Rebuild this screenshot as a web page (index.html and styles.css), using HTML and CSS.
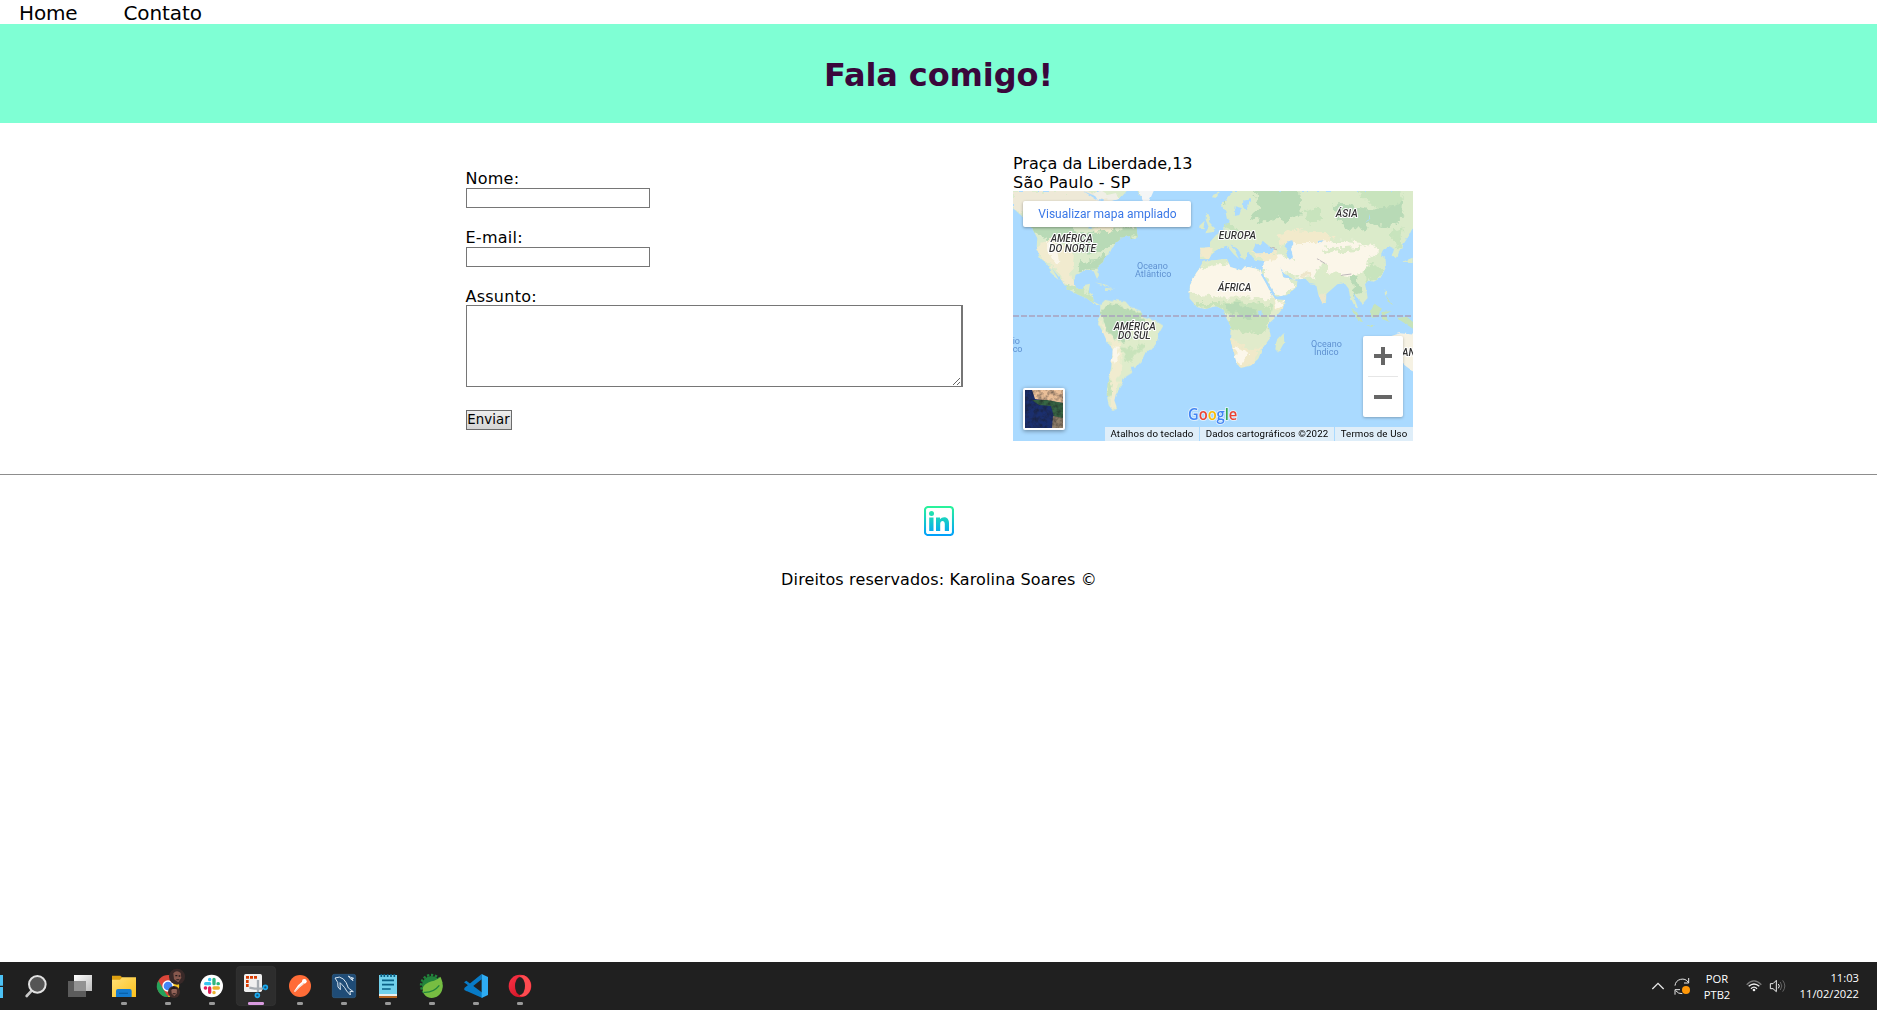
FILE: index.html
```html
<!DOCTYPE html>
<html lang="pt-BR">
<head>
<meta charset="utf-8">
<title>Contato</title>
<link rel="stylesheet" href="styles.css">
</head>
<body>
<nav class="nav"><a class="nav-home">Home</a><a class="nav-contact">Contato</a></nav>
<header class="banner"><h1>Fala comigo!</h1></header>
<main class="contact">
  <form class="form">
    <label for="nome">Nome:</label>
    <input id="nome" class="field" type="text">
    <label for="email">E-mail:</label>
    <input id="email" class="field" type="text">
    <label for="assunto">Assunto:</label>
    <textarea id="assunto" class="message"></textarea>
    <button class="send" type="button">Enviar</button>
  </form>
  <section class="place">
    <p class="address">Praça da Liberdade,13<br><span class="city">São Paulo - SP</span></p>
    <div class="map">
      <svg class="world" viewBox="9 9 1200 750">
        <defs>
          <clipPath id="na"><path id="pna" d="M9 9H395L392 35L370 60L365 95L380 120L383 148L362 154L360 144L338 148L318 165L305 182L298 198L284 206L279 222L262 236L267 262L261 273L251 250L225 248L197 260L191 282L200 302L217 306L223 291L240 287L236 311L248 320L252 341L270 351L262 355L230 331L205 320L171 302L151 272L125 240L142 268L146 276L130 264L111 228L91 214L79 184L82 151L66 120L40 100L25 75L9 60Z"/></clipPath>
          <clipPath id="sa"><path id="psa" d="M271 350L286 335L306 340L315 336L346 340L358 354L392 369L400 388L440 400L460 413L446 438L440 465L425 485L408 490L394 520L375 540L362 536L367 554L343 569L337 585L326 603L318 617L313 637L322 661L310 669L296 652L290 620L293 580L303 542L308 485L291 460L278 431L264 406L270 383Z"/></clipPath>
          <clipPath id="af"><path id="paf" d="M579 221L620 216L651 213L661 237L694 247L705 235L752 245L758 265L779 309L797 334L826 336L819 361L794 391L775 408L783 447L758 480L745 512L722 533L694 541L681 529L660 452L663 418L649 390L642 366L619 355L585 363L562 358L538 331L539 294L557 258L567 242Z"/></clipPath>
          <clipPath id="ea"><path id="pea" d="M633 51L668 9H1209V118L1196 145L1178 172L1168 189L1160 213L1147 201L1153 180L1137 175L1119 189L1113 202L1127 214L1128 238L1112 269L1091 281L1074 278L1065 289L1070 311L1073 330L1058 347L1042 331L1030 315L1036 339L1046 367L1034 355L1020 326L1016 302L1003 285L982 289L967 302L949 318L948 346L938 349L925 320L918 288L899 286L886 272L852 275L827 260L812 241L821 268L863 278L857 300L830 322L798 326L768 279L755 255L763 220L735 215L723 201L712 193L705 216L694 208L683 181L661 169L677 192L687 213L671 199L650 173L632 179L609 193L597 214L570 213L571 179L600 177L600 162L618 141L643 125L642 107L658 104L659 87L688 81L695 60L674 55L671 89L651 94L646 69Z"/></clipPath>
          <filter id="rough" x="0" y="0" width="100%" height="100%"><feTurbulence type="fractalNoise" baseFrequency=".045" numOctaves="3" seed="7"/><feDisplacementMap in="SourceGraphic" scale="34" xChannelSelector="R" yChannelSelector="G"/></filter>
          <filter id="coast" x="-2%" y="-2%" width="104%" height="104%"><feTurbulence type="fractalNoise" baseFrequency=".07" numOctaves="2" seed="3"/><feDisplacementMap in="SourceGraphic" scale="9" xChannelSelector="R" yChannelSelector="G"/></filter>
        </defs>
        <rect x="9" y="9" width="1200" height="750" fill="#aadaff"/>
        <g filter="url(#coast)">
          <g clip-path="url(#na)">
            <rect width="410" height="370" fill="#dcebcc"/>
            <g filter="url(#rough)">
              <path fill="#b8dab6" d="M60 105H180L200 135L320 125L390 105V155L300 180L230 200L200 165L130 150L120 190L105 150L70 140ZM205 223L250 220L285 200V245L245 245L210 250Z"/>
              <path fill="#f1ebcf" d="M82 170L130 155L190 190L185 240L195 300L170 290L130 235L95 215Z"/>
              <path fill="#faf6ea" d="M105 165L140 175L148 218L130 222Z"/>
              <path fill="#eee9d7" d="M9 9H220L310 30V70H9Z"/><path fill="#f2eccf" d="M250 120L310 110V130L250 135Z"/>
              <path fill="#c8e4bd" d="M150 278L175 292L215 305L245 318L255 345L215 330L165 303Z"/>
            </g>
          </g>
          <g clip-path="url(#sa)">
            <rect x="250" y="330" width="225" height="350" fill="#dfeccb"/>
            <g filter="url(#rough)">
              <path fill="#b9dab5" d="M275 370L295 345L355 358L398 380L405 405L370 410L350 460L310 448L285 420Z"/>
              <path fill="#f1eccf" d="M265 400L300 440L335 470L334 530L320 620L320 662L302 665L303 535L307 485L280 445Z"/>
              <path fill="#fbf7eb" d="M309 475L326 480L320 530L306 520Z"/>
              <path fill="#c8e3bb" d="M335 480L350 525L375 500L405 480L390 462L370 490ZM293 570L305 585L300 625L289 622Z"/>
            </g>
          </g>
          <g clip-path="url(#ea)">
            <rect x="550" width="660" height="360" fill="#dbebca"/>
            <g filter="url(#rough)">
              <path fill="#b8dab6" d="M730 0H870L875 75L845 85L830 108L800 90L760 105L720 88L750 65ZM963 60L990 45L1080 65L1180 30L1175 90L1140 120L1080 105L1050 125L1005 115ZM1014 260L1040 265L1052 310L1038 330L1027 295ZM630 25L650 15L645 50Z"/>
              <path fill="#c8e4bd" d="M1030 0H1185L1160 55L1090 55ZM1065 230L1095 222L1120 245L1105 270L1070 280ZM1148 125L1178 115L1170 188L1150 165ZM630 110L660 105L700 130L670 140ZM880 70L930 60L940 95L900 105Z"/>
              <path fill="#f2eacb" d="M800 145L850 125L915 130L970 145L970 165L875 170L820 170ZM725 195L800 192L810 215L760 218ZM570 180L606 181L600 210L573 212Z"/>
              <path fill="#fbf6e9" d="M835 165L915 165L990 158L1090 168L1102 195L1070 220L1060 255L1018 263L965 255L930 225L910 270L820 262L755 247L763 215L815 205L840 210ZM758 250L800 255L858 285L830 320L803 325ZM902 270L918 268L916 284Z"/>
              <path fill="#dcebc9" d="M935 182L1070 172L1035 190L960 195ZM930 222L965 256L1010 260L1003 282L982 275L945 260Z"/>
              <path fill="#ede6cb" d="M875 245L900 252L895 268L875 260ZM925 320L947 310L946 344L936 345Z"/>
            </g>
          </g>
          <g clip-path="url(#af)">
            <rect x="530" y="205" width="310" height="345" fill="#e1ebcb"/>
            <g filter="url(#rough)">
              <path fill="#fbf6e8" d="M570 235L640 223L760 240L790 335L755 332L700 326L615 325L540 320L535 275Z"/>
              <path fill="#dcebc8" d="M572 220L650 210L665 226L610 230L575 246Z"/>
              <path fill="#c8e3bb" d="M540 345L620 345L685 340L760 345L785 360L770 430L710 435L665 425L650 385L635 358L565 362Z"/>
              <path fill="#b8dab5" d="M650 352L680 345L710 360L745 370L720 390L665 378Z"/>
              <path fill="#f0e9c9" d="M663 450L690 470L735 485L760 465L730 530L690 541L660 495ZM790 340L825 335L812 370L790 365Z"/>
              <path fill="#fcf7eb" d="M664 472L695 482L715 495L688 530ZM791 335L824 338L818 355L795 360Z"/>
            </g>
          </g>
          <path fill="#dcebc9" d="M568 113L584 98L580 124L568 122ZM588 74L600 87L597 101L616 122L611 132L586 136L596 117L587 95ZM821 436L823 463L804 497L796 480L800 458ZM255 283L288 290L306 299L284 295ZM285 300L316 302L288 306ZM365 142L381 145L377 153L364 150ZM610 20L630 13L620 30L606 28ZM1124 303L1132 316L1125 323ZM1177 221L1208 209V222Z"/>
          <path fill="#c6e3ba" d="M1021 360L1042 375L1059 402L1046 400ZM1080 372L1094 347L1112 360L1105 387L1086 389ZM1058 407L1095 412L1084 417ZM1118 371L1145 370L1125 379L1139 402L1116 393ZM1128 322L1146 352L1134 343ZM1158 390L1190 386L1209 402V422L1175 400Z"/>
          <path fill="#f4f6f6" d="M383 0H435L418 38L402 48Z"/>
          <path fill="#f0efe6" d="M250 17L270 5L295 20L318 15L325 32L310 40L290 25L260 38ZM285 75L310 65L330 75L350 70L380 110L370 120L340 90L305 95Z"/>
          <path fill="#f6f2e4" d="M1125 450L1170 436L1215 440V555L1180 529L1148 510Z"/>
          <path fill="#aadaff" d="M220 9L250 22L290 42L330 32L350 9H383L402 48L395 60H350L320 42L280 48ZM728 188L737 169L753 168L758 158L777 174L795 187L782 195L738 196ZM832 160L847 157L850 169L842 180L849 208L839 215L830 203L834 188L823 177ZM927 158L941 157L927 169ZM1061 106L1077 94L1077 77L1082 94ZM700 35L723 30L714 54L707 67L699 57ZM642 196L647 190L648 203ZM654 192L660 190L660 211L654 205ZM744 370L755 367L755 380L747 381ZM9 70L38 83L58 120L79 150V184L9 184Z"/>
          <path fill="#f0efe6" d="M255 22L272 12L290 25L315 18L322 30L305 38L288 30L264 38Z"/>
          <path fill="none" stroke="#aadaff" stroke-width="6" d="M755 258L780 300L799 331M232 113L242 118M310 100L323 107"/>
          <path fill="none" stroke="#bdb8ba" stroke-width="3" d="M780 179L803 185M919 211L946 227M985 263L1024 258"/>
        </g>
        <path d="M9 384H1209" stroke="#a9a1bd" stroke-width="5" stroke-dasharray="18 6"/>
        <g class="continents">
          <text x="122" y="163" textLength="126">AMÉRICA</text><text x="117" y="193" textLength="141">DO NORTE</text>
          <text x="626" y="153" textLength="112">EUROPA</text><text x="977" y="88" textLength="66">ÁSIA</text>
          <text x="624" y="309" textLength="100">ÁFRICA</text><text x="311" y="427" textLength="126">AMÉRICA</text>
          <text x="324" y="454" textLength="98">DO SUL</text><text x="1176" y="505">AN</text>
        </g>
        <g class="oceans">
          <text x="381" y="243" textLength="93">Oceano</text><text x="375" y="267" textLength="109">Atlântico</text>
          <text x="903" y="477" textLength="93">Oceano</text><text x="912" y="501" textLength="74">Índico</text>
          <text x="8" y="468">io</text><text x="8" y="492">co</text>
        </g>
        <g class="google"><text x="534" y="697" textLength="148" lengthAdjust="spacingAndGlyphs"><tspan fill="#4285f4">G</tspan><tspan fill="#ea4335">o</tspan><tspan fill="#fbbc05">o</tspan><tspan fill="#4285f4">g</tspan><tspan fill="#34a853">l</tspan><tspan fill="#ea4335">e</tspan></text></g>
      </svg>
      <a class="enlarge">Visualizar mapa ampliado</a>
      <div class="satellite"><svg viewBox="0 0 38 38"><defs><filter id="land" x="0" y="0" width="1" height="1" color-interpolation-filters="sRGB"><feTurbulence type="fractalNoise" baseFrequency=".22" numOctaves="3" result="n"/><feColorMatrix in="n" values="0 0 0 0 .1 0 0 0 0 .1 0 0 0 0 .12 1.2 0 0 0 -.45" result="d"/><feMerge><feMergeNode in="SourceGraphic"/><feMergeNode in="d"/></feMerge></filter></defs><g filter="url(#land)"><rect width="38" height="38" fill="#1b2f6e"/><path fill="#eabf98" d="M7 0H38V13L24 11L10 9Z"/><path fill="#376644" d="M7 10L22 10L38 13V32L29 27L26 16L14 15Z"/><path fill="#91806a" d="M28 26L38 28V38H27Z"/></g></svg></div>
      <div class="zoom"><svg viewBox="0 0 40 81"><path d="M11 20H29M20 11V29M11 61H29" stroke="#666" stroke-width="4"/><path d="M5 40.5H35" stroke="#e6e6e6"/></svg></div>
      <div class="credits"><span class="keys">Atalhos do teclado</span><span class="data">Dados cartográficos ©2022</span><span class="terms">Termos de Uso</span></div>
    </div>
  </section>
</main>
<footer class="footer">
  <svg class="linkedin" viewBox="0 0 30 30"><defs><linearGradient id="lk" gradientUnits="userSpaceOnUse" x1="0" y1="0" x2="0" y2="30"><stop stop-color="#2af598"/><stop offset="1" stop-color="#009efd"/></linearGradient></defs><rect x="1" y="1" width="28" height="28" rx="3" fill="none" stroke="url(#lk)" stroke-width="2.1"/><g fill="url(#lk)"><circle cx="7.5" cy="7.5" r="2.5"/><path d="M5.2 11.5H9.5V25H5.2ZM12 11.5H16V13.3C18.5 10 25 10.4 25 17V25H20.8V18C20.8 14 16.2 14 16.2 18V25H12Z"/></g></svg>
  <p>Direitos reservados: Karolina Soares ©</p>
</footer>
<div class="taskbar">
  <svg class="start" viewBox="0 21 42 144"><path fill="#4cc2f5" d="M0 60H9V92H0ZM0 96H9V129H0Z"/></svg>
  <svg class="app" viewBox="42 21 132 144"><path d="M95 107L80 123" stroke="#c9c9c9" stroke-width="8" stroke-linecap="round"/><circle cx="112" cy="88" r="25" fill="#555" stroke="#e1e1e1" stroke-width="6"/></svg>
  <svg class="app" viewBox="174 21 132 144"><defs><linearGradient id="tv" x2="1" y2="1"><stop stop-color="#fff"/><stop offset="1" stop-color="#bbb"/></linearGradient></defs><path fill="#5c5c5c" d="M204 78H258V126H204Z"/><path fill="url(#tv)" d="M222 60H276V108H222Z"/><path fill="#929292" d="M222 78H258V108H222Z"/></svg>
  <svg class="app" viewBox="306 21 132 144"><defs><linearGradient id="fo" x2="1" y2="1"><stop stop-color="#ffe078"/><stop offset="1" stop-color="#fbc01b"/></linearGradient></defs><path fill="#dda011" d="M336 62H361L368 68V80H336Z"/><path fill="url(#fo)" d="M336 74H360L367 67H408V126H336Z"/><path fill="#147bd0" d="M348 126V108Q348 102 354 102H389Q395 102 395 108V126Z"/><path fill="#0961aa" d="M357 113H384V117H357Z"/><rect class="dot" x="363" y="141" width="18" height="9" rx="4"/></svg>
  <svg class="app" viewBox="438 21 132 144"><circle cx="504" cy="93" r="33" fill="#db4639"/><path fill="#25a35a" d="M475 77L500 120L508 126A33 33 0 0 1 475 77Z"/><path fill="#fbc922" d="M504 78H534A33 33 0 0 1 504 126L518 100Z"/><circle cx="504" cy="93" r="15" fill="#4285f4" stroke="#fff" stroke-width="4"/><circle cx="531" cy="65" r="24" fill="#392928"/><path fill="#87584d" d="M520 55Q530 43 542 54L544 68L535 82L522 73Z"/><path fill="#251b1c" d="M526 60H532V64H526ZM536 61H541V65H536ZM529 73H538V76H529Z"/><circle cx="522" cy="111" r="18" fill="#412c29"/><path fill="#936358" d="M514 105Q521 94 531 104L530 116L523 123L515 116Z"/><path fill="#281c1c" d="M511 103L520 94L533 101L520 102ZM518 115H527V118H518Z"/><rect class="dot" x="495" y="141" width="18" height="9" rx="4"/></svg>
  <svg class="app" viewBox="570 21 132 144"><circle cx="635" cy="93" r="34" fill="#fff"/><g stroke-width="10" stroke-linecap="round"><path stroke="#36c5f0" d="M617 86H629M629 73V74"/><path stroke="#2eb67d" d="M642 73V86M655 86H654"/><path stroke="#e01e5a" d="M629 99V112M616 99H617"/><path stroke="#ecb22e" d="M642 99H655M642 112V113"/></g><rect class="dot" x="627" y="141" width="18" height="9" rx="4"/></svg>
  <svg class="app" viewBox="702 21 132 144"><rect x="709" y="34" width="118" height="118" rx="12" fill="#2d2d2d" stroke="#363636" stroke-width="2"/><rect x="732" y="57" width="54" height="54" rx="5" fill="#f0f0f0"/><path fill="none" stroke="#d83b01" stroke-width="8" stroke-dasharray="9 3" d="M738 67H774M742 75V98"/><path d="M774 75V111M748 98L764 101H789" fill="none" stroke="#a6acb2" stroke-width="7"/><g fill="#195274" stroke="#1ba9ee" stroke-width="5"><circle cx="796" cy="97" r="6"/><circle cx="772" cy="121" r="6"/></g><rect x="744" y="141" width="48" height="9" rx="4" fill="#d99be0"/></svg>
  <svg class="app" viewBox="24 21 132 144"><circle cx="90" cy="93" r="33" fill="#ff6c37"/><path fill="#fff" d="M72 109L84 91L98 79L101 88L88 98L75 111Z"/><circle cx="103" cy="79" r="7" fill="#fff"/><path d="M73 110L99 86" stroke="#e7b39f" stroke-width="2"/><rect class="dot" x="81" y="141" width="18" height="9" rx="4"/></svg>
  <svg class="app" viewBox="156 21 132 144"><rect x="187" y="58" width="70" height="70" rx="6" fill="#1f4c77" stroke="#315f87" stroke-width="2"/><path fill="none" stroke="#d8e5f0" stroke-width="3" d="M195 69Q209 62 220 72Q230 81 235 99L250 110L240 109L241 120L230 108L224 98L216 89L210 83L211 104L204 96L203 82ZM235 63L240 70L249 77L245 70L251 70L242 67Z"/><rect class="dot" x="213" y="141" width="18" height="9" rx="4"/></svg>
  <svg class="app" viewBox="288 21 132 144"><path fill="#71d1ec" d="M327 60H381V119H327Z"/><path fill="#e9eff0" d="M327 117H381V123H327Z"/><path fill="#b46420" d="M327 123H381V129H327Z"/><path stroke="#096086" stroke-width="5" d="M334 57V66M343 57V66M353 57V66M363 57V66M373 57V66M336 76H372M336 89H372M336 102H362"/><rect class="dot" x="345" y="141" width="18" height="9" rx="4"/></svg>
  <svg class="app" viewBox="420 21 132 144"><circle cx="484" cy="91" r="28" fill="#22843c"/><circle cx="484" cy="91" r="31" fill="none" stroke="#22843c" stroke-width="7" stroke-dasharray="7 5"/><path fill="#77bd42" d="M458 103C461 76 499 82 511 65C526 94 517 127 485 129C469 129 459 119 458 103Z"/><path d="M461 112C477 113 494 109 508 91" fill="none" stroke="#22843c" stroke-width="4"/><rect class="dot" x="477" y="141" width="18" height="9" rx="4"/></svg>
  <svg class="app" viewBox="552 21 132 144"><path fill="#087bc7" d="M582 82L589 77L637 113V129L583 105V99L635 57V73L590 109L582 104L597 93Z"/><path fill="#2eacf3" d="M635 57L654 66V120L635 129Z"/><rect class="dot" x="609" y="141" width="18" height="9" rx="4"/></svg>
  <svg class="app" viewBox="684 21 132 144"><defs><linearGradient id="op" x2="1" y2="1"><stop stop-color="#ff3448"/><stop offset="1" stop-color="#c20c1c"/></linearGradient></defs><circle cx="750" cy="93" r="34" fill="url(#op)"/><path fill="#ff4b50" d="M750 63C765 54 784 75 783 93C783 112 767 130 750 123Z"/><ellipse cx="750" cy="93" rx="15" ry="27" fill="#222"/><rect class="dot" x="741" y="141" width="18" height="9" rx="4"/></svg>
  <div class="tray">
    <svg class="tray-icons" viewBox="57 21 144 144"><g fill="none" stroke="#e8e8e8" stroke-width="4"><path d="M67 102L84 85L101 102"/><path stroke-width="3" d="M135 92A22 22 0 0 1 175 82M176 69V84H162M135 119V104H150M137 107Q145 117 157 116"/></g><circle cx="168" cy="105" r="12" fill="#ff9808"/></svg>
    <div class="lang">POR<br>PTB2</div>
    <svg class="sound" viewBox="342 21 132 144"><g fill="none" stroke-width="4"><path stroke="#777" d="M350 89Q372 66 394 89"/><path stroke="#eee" d="M356 94Q372 80 388 94M363 101Q372 92 381 101"/><path stroke="#eee" stroke-width="3" d="M421 86H429L439 76V110L429 101H421ZM445 87Q451 93 445 100"/><path stroke="#666" stroke-width="3" d="M451 81Q460 93 451 105M458 76Q471 93 458 110"/></g><circle cx="372" cy="105" r="4" fill="#eee"/></svg>
    <div class="clock">11:03<br>11/02/2022</div>
  </div>
</div>
</body>
</html>
```
FILE: styles.css
```css
* { box-sizing: border-box; }
body { margin: 0; height: 1010px; display: flex; flex-direction: column; overflow: hidden; background: #fff; color: #000; font: 16px/19px "DejaVu Sans", Verdana, sans-serif; }
.nav { height: 24px; padding-left: 19px; display: flex; gap: 46px; font-size: 20px; line-height: 26px; }
.nav-home { letter-spacing: -.15px; }
.nav-contact { letter-spacing: -.1px; }
.banner { height: 99px; padding-top: 3px; background: #7fffd4; display: flex; align-items: center; justify-content: center; }
h1 { margin: 0; font-size: 32px; line-height: 39px; letter-spacing: -.1px; color: #3a073b; }
.contact { height: 352px; padding: 30px 0 0 465.5px; display: flex; gap: 49.5px; border-bottom: 1px solid #8d8d8d; }
.form { width: 498px; padding-top: 16px; display: flex; flex-direction: column; align-items: flex-start; letter-spacing: .25px; }
.field { width: 184px; height: 20px; margin: 0 0 20px; border: 1px solid #767676; padding: 0; }
.message { width: 497px; height: 82px; margin: -1px 0 23px; border: 1px solid #767676; border-right-width: 2px; resize: both; background: #fff; }
.send { width: 46px; height: 20px; padding: 0; border: 1px solid #6b6b6b; background: linear-gradient(#ededed, #d4d4d4); font: 13.33px/18px "DejaVu Sans", Verdana, sans-serif; letter-spacing: .05px; color: #000; white-space: nowrap; }
.place { width: 400px; }
.address { margin: 0; height: 38px; padding-top: 1px; }
.city { letter-spacing: .28px; }
.map { position: relative; width: 400px; height: 250px; overflow: hidden; }
.world { display: block; width: 400px; height: 250px; }
.continents { font: italic 500 30.5px Roboto, sans-serif; fill: #333; stroke: #fff; stroke-width: 6px; stroke-linejoin: round; paint-order: stroke; }
.oceans { font: 400 27px Roboto, sans-serif; fill: #5f91d1; }
.google { font: 600 48px "Open Sans", sans-serif; stroke: #e7f4fe; stroke-width: 5px; paint-order: stroke; }
.enlarge { position: absolute; left: 10px; top: 10px; width: 168px; height: 26px; padding-left: 1px; border-radius: 2px; background: #fff; box-shadow: 0 1px 3px #0005; color: #3b78e7; font: 12px/26px Roboto, sans-serif; text-align: center; }
.satellite { position: absolute; left: 10px; top: 197px; width: 42px; height: 42px; padding: 2px; border-radius: 2px; background: #fff; box-shadow: 0 1px 4px #0006; }
.satellite svg { display: block; width: 38px; height: 38px; }
.zoom { position: absolute; right: 10px; top: 145px; width: 40px; height: 81px; border-radius: 2px; background: #fff; box-shadow: 0 1px 3px #0004; }
.zoom svg { display: block; }
.credits { position: absolute; right: 0; bottom: 0; display: flex; gap: 1px; font: 9.7px/14px Roboto, sans-serif; letter-spacing: .13px; text-align: center; }
.credits span { height: 14px; background: #dfeef9; }
.keys { width: 94px; }
.data { width: 134px; }
.terms { width: 78px; }
.footer { flex: 1; padding-top: 31px; display: flex; flex-direction: column; align-items: center; }
.linkedin { width: 30px; height: 30px; margin-left: 1px; }
.footer p { margin: 34px 0 0 1px; letter-spacing: .13px; }
.taskbar { height: 48px; flex: none; display: flex; background: #202020; }
.start { width: 14px; height: 48px; }
.app { width: 44px; height: 48px; }
.dot { fill: #999; }
.tray { margin-left: auto; padding-right: 18px; display: flex; color: #fff; font: 11.2px/16px "Open Sans", sans-serif; }
.tray-icons { width: 48px; height: 48px; }
.lang { width: 40px; padding-top: 9px; text-align: center; }
.sound { width: 44px; height: 48px; margin-left: 7px; }
.clock { width: 71px; padding-top: 8px; text-align: right; }
```
